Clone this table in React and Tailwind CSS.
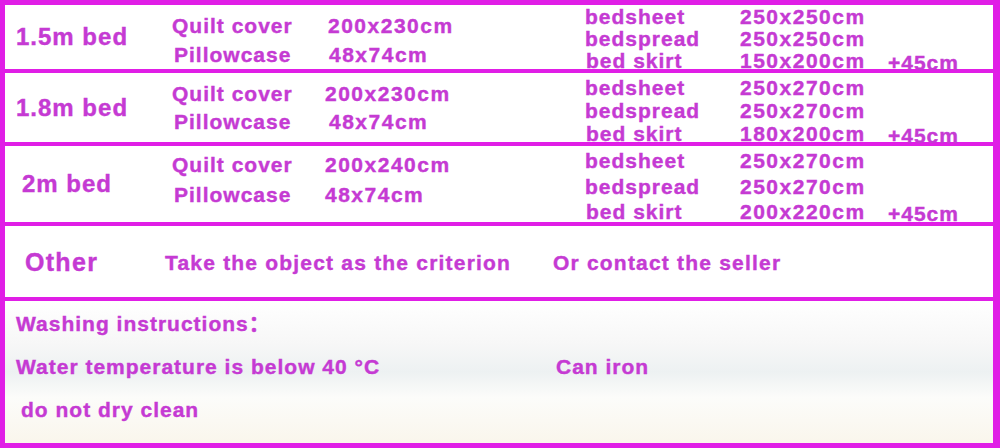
import React from 'react';

const font = { fontFamily: '"Liberation Sans", Arial, "Noto Sans CJK SC", sans-serif' };

function BedRow({ label, labelCls, height, leftCls, rightCls, quilt, pillow, quiltCls, pillowCls, sheet, spread, skirt }) {
  return (
    <div className={`flex bg-white ${height}`}>
      <div className={`w-[167px] flex items-center text-[24px] tracking-[1px] ${labelCls}`}>{label}</div>
      <div className={`w-[156px] flex flex-col text-[21px] tracking-[1px] ${leftCls}`}>
        <div>Quilt cover</div>
        <div className="ml-[2px]">Pillowcase</div>
      </div>
      <div className={`w-[257px] flex flex-col text-[21px] tracking-[1.5px] ${leftCls}`}>
        <div className={quiltCls}>{quilt}</div>
        <div className={pillowCls}>{pillow}</div>
      </div>
      <div className={`w-[155px] flex flex-col text-[21px] tracking-[1px] ${rightCls}`}>
        <div>bedsheet</div>
        <div>bedspread</div>
        <div className="ml-[1px]">bed skirt</div>
      </div>
      <div className={`w-[148px] flex flex-col text-[21px] tracking-[1.5px] ${rightCls}`}>
        <div>{sheet}</div>
        <div>{spread}</div>
        <div>{skirt}</div>
      </div>
      <div className={`flex-1 flex flex-col text-[21px] tracking-[1px] ${rightCls}`}>
        <div>&nbsp;</div>
        <div>&nbsp;</div>
        <div className="mt-[2px]">+45cm</div>
      </div>
    </div>
  );
}

export default function App() {
  return (
    <div
      className="w-[1000px] h-[448px] bg-[#e01ee6] pl-[5px] pt-[5px] pr-[7px] pb-[5px] flex flex-col gap-[4px] font-bold text-[#c53ad3] [-webkit-text-stroke:0.4px_#c53ad3] whitespace-nowrap overflow-hidden"
      style={font}
    >
      <BedRow
        label="1.5m bed"
        labelCls="pl-[11px]"
        height="h-[64px]"
        leftCls="pt-[6px] leading-[29px]"
        rightCls="pt-[1px] leading-[22px]"
        quilt="200x230cm"
        pillow="48x74cm"
        quiltCls=""
        pillowCls="ml-[1px]"
        sheet="250x250cm"
        spread="250x250cm"
        skirt="150x200cm"
      />
      <BedRow
        label="1.8m bed"
        labelCls="pl-[11px]"
        height="h-[69px]"
        leftCls="pt-[7px] leading-[28px]"
        rightCls="pt-[3px] leading-[23px]"
        quilt="200x230cm"
        pillow="48x74cm"
        quiltCls="-ml-[3px]"
        pillowCls="ml-[1px]"
        sheet="250x270cm"
        spread="250x270cm"
        skirt="180x200cm"
      />
      <BedRow
        label="2m bed"
        labelCls="pl-[17px]"
        height="h-[76px]"
        leftCls="pt-[4px] leading-[30px]"
        rightCls="pt-[2px] leading-[25.5px]"
        quilt="200x240cm"
        pillow="48x74cm"
        quiltCls="-ml-[3px]"
        pillowCls="-ml-[3px]"
        sheet="250x270cm"
        spread="250x270cm"
        skirt="200x220cm"
      />
      <div className="h-[71px] bg-white flex items-center pt-[2px]">
        <div className="w-[160px] pl-[20px] text-[25px] tracking-[1.3px]">Other</div>
        <div className="w-[388px] text-[21px] tracking-[1.2px]">Take the object as the criterion</div>
        <div className="text-[21px] tracking-[1.2px]">Or contact the seller</div>
      </div>
      <div className="flex-1 bg-[linear-gradient(to_bottom,#ffffff_0%,#f7f7f7_30%,#edf1f2_50%,#fcfcfa_68%,#faf6ec_100%)] pt-[1px] text-[21px] tracking-[1px] leading-[43px]">
        <div className="pl-[11px]">Washing instructions：</div>
        <div className="flex pl-[11px]">
          <div className="w-[540px]">Water temperature is below 40 °C</div>
          <div>Can iron</div>
        </div>
        <div className="pl-[16px]">do not dry clean</div>
      </div>
    </div>
  );
}
